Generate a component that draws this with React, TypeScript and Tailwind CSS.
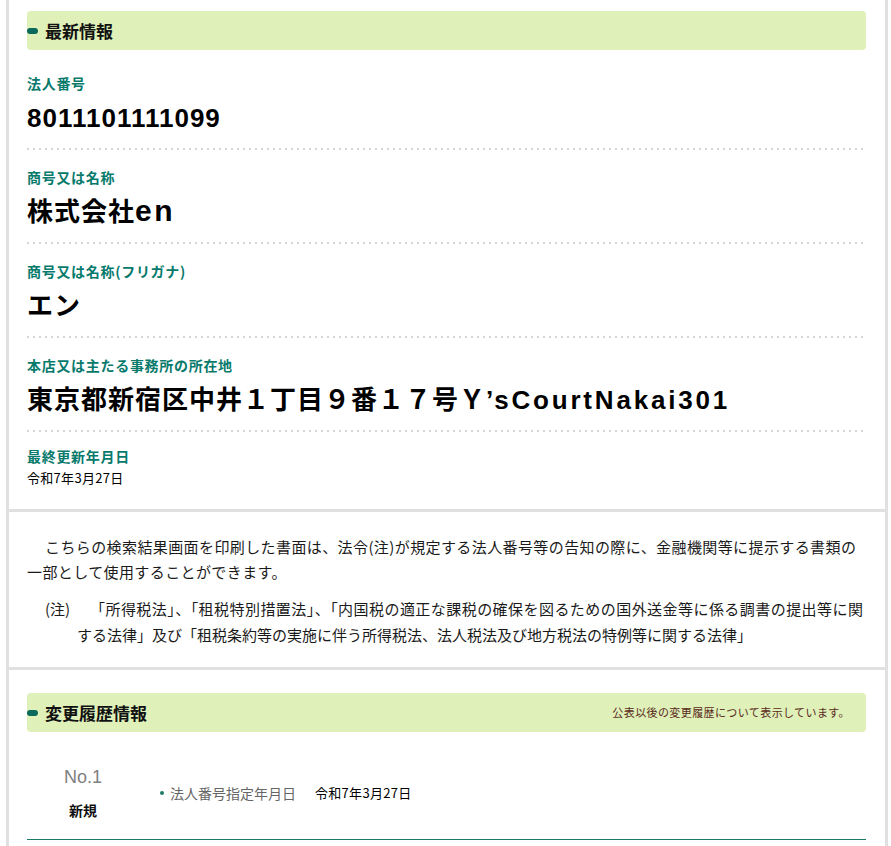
import React from "react";

const jp = { fontFamily: '"Noto Sans CJK JP", sans-serif' };
const val = { fontFamily: '"Liberation Sans", "Noto Sans CJK JP", sans-serif' };

function Header({ title, note }: { title: string; note?: string }) {
  return (
    <div className="flex h-[39px] items-center rounded-[4px] bg-[#dff0b9] pr-[16px]">
      <span className="h-[6px] w-[11px] rounded-full bg-[#0b6a5c]" />
      <span className="ml-[7px] text-[17px] font-bold leading-none text-[#111]">{title}</span>
      {note && (
        <span className="ml-auto text-[11px] leading-none tracking-[0.4px] text-[#5a2a20]">{note}</span>
      )}
    </div>
  );
}

function Dots() {
  return <div className="h-[2px] w-full bg-[repeating-linear-gradient(to_right,#d6d6d6_0_2px,transparent_2px_6px)]" />;
}

function Item({ label, children }: { label: string; children: React.ReactNode }) {
  return (
    <div>
      <div className="pt-[18px] pb-[14px]">
        <div className="text-[14px] font-bold leading-[18px] tracking-[0.7px] text-[#077a6c]">{label}</div>
        <div
          className="mt-[10px] h-[32px] overflow-visible text-[26px] font-bold leading-[32px] tracking-[1px] text-black whitespace-nowrap"
          style={val}
        >
          {children}
        </div>
      </div>
      <Dots />
    </div>
  );
}

export default function App() {
  return (
    <div className="h-[846px] w-[891px] overflow-hidden bg-white" style={jp}>
      <div className="ml-[6px] h-[846px] w-[882px] border-x-[3px] border-[#e0e0e0]">
        {/* Section 1 */}
        <div className="pl-[18px] pr-[19px] pt-[11px] pb-[22px]">
          <Header title="最新情報" />
          <div className="mt-[6px]">
            <Item label="法人番号">8011101111099</Item>
            <Item label="商号又は名称">
              株式会社<span className="text-[30px] leading-none tracking-[2.5px]">en</span>
            </Item>
            <Item label="商号又は名称(フリガナ)">エン</Item>
            <Item label="本店又は主たる事務所の所在地">
              東京都新宿区中井１丁目９番１７号Ｙ’<span className="tracking-[2.8px]">sCourtNakai301</span>
            </Item>
            <div className="pt-[15px]">
              <div className="text-[14px] font-bold leading-[18px] tracking-[0.7px] text-[#077a6c]">最終更新年月日</div>
              <div className="mt-[4px] text-[13px] leading-[18px] tracking-[0.3px] text-black">令和7年3月27日</div>
            </div>
          </div>
        </div>
        <div className="h-[3px] bg-[#e0e0e0]" />

        {/* Section 2 */}
        <div className="pl-[18px] pr-[10px] pt-[22px] pb-[19px] text-[15px] text-[#1a1a1a]">
          <p className="whitespace-nowrap indent-[18px] leading-[25px] tracking-[0.4px]">
            こちらの検索結果画面を印刷した書面は、法令(注)が規定する法人番号等の告知の際に、金融機関等に提示する書類の
            <br />
            一部として使用することができます。
          </p>
          <p className="mt-[12px] whitespace-nowrap pl-[50px] -indent-[32px] leading-[26px]">
            <span className="inline-block w-[45px] indent-0">(注)</span>
            <span className="tracking-[0.45px]">
              「所得税法」、「租税特別措置法」、「内国税の適正な課税の確保を図るための国外送金等に係る調書の提出等に関
            </span>
            <br />
            する法律」及び「租税条約等の実施に伴う所得税法、法人税法及び地方税法の特例等に関する法律」
          </p>
        </div>
        <div className="h-[3px] bg-[#e0e0e0]" />

        {/* Section 3 */}
        <div className="pl-[18px] pr-[19px] pt-[23px]">
          <Header title="変更履歴情報" note="公表以後の変更履歴について表示しています。" />
          <div className="mt-[24px] flex items-center border-b border-[#1e7a66] pt-[10px] pb-[19px]">
            <div className="flex w-[112px] flex-col items-center">
              <div className="text-[18px] leading-[22px] text-[#808080]" style={val}>
                No.1
              </div>
              <div className="mt-[12px] text-[14px] font-bold leading-[20px] text-[#111]">新規</div>
            </div>
            <div className="ml-[21px] flex items-center">
              <span className="h-[4px] w-[4px] rounded-full bg-[#1e7a66]" />
              <span className="ml-[6px] text-[14px] leading-[20px] text-[#666]">法人番号指定年月日</span>
              <span className="ml-[19px] text-[13px] leading-[20px] tracking-[0.3px] text-black">令和7年3月27日</span>
            </div>
          </div>
        </div>
      </div>
    </div>
  );
}
